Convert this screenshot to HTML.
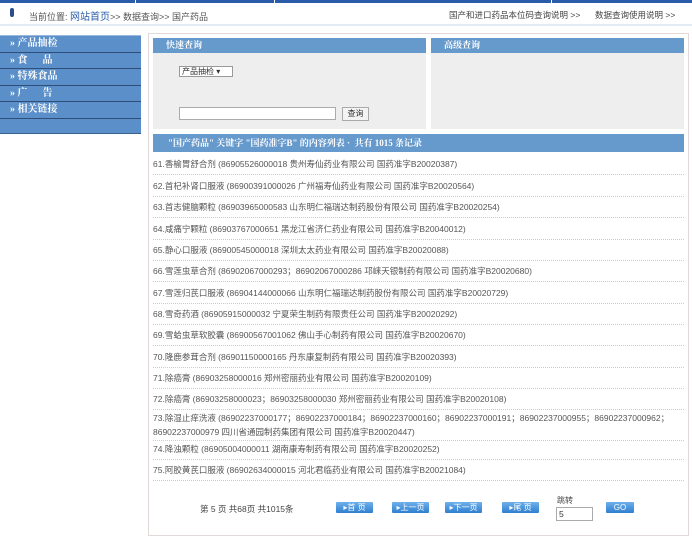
<!DOCTYPE html>
<html><head><meta charset="utf-8"><style>
*{margin:0;padding:0;box-sizing:border-box}
body{width:692px;height:547px;background:#fff;font-family:"Liberation Sans","Noto Sans CJK SC",sans-serif;font-size:9px;color:#333;position:relative;overflow:hidden}
.a{position:absolute}
.topbar{left:0;top:0;width:692px;height:3px;background:#2a5caa}
.crumb{left:0;top:4px;width:692px;height:22px;border-bottom:2px solid #e3ecf5}
.nav{left:0;top:35px;width:141px;height:99px;background:#5b8fc9;border-top:1px solid #9ab8dc;border-bottom:1px solid #3a5f8c}
.nav div{height:16.5px;border-bottom:1px solid #2f4f78;color:#fff;font-weight:bold;font-family:"Liberation Serif","Noto Serif CJK SC",serif;font-size:10px;line-height:15px;padding-left:10px}
.main{left:148px;top:33px;width:541px;height:503px;border:1px solid #e2d8d8}
.pan{background:#eeeeee}
.ph{height:15px;background:#6699cc;color:#fff;font-weight:bold;font-family:"Liberation Serif","Noto Serif CJK SC",serif;font-size:9px;line-height:15px;padding-left:13px}
.row{left:153px;width:531px;font-size:8.5px;color:#555;line-height:12px;border-bottom:1px dotted #ccc}
.btn{top:502px;height:11px;width:37px;background:linear-gradient(#6fb0ea,#2f7fcf);color:#fff;font-size:8px;line-height:11px;text-align:center;border-radius:1px}
</style></head><body>
<div class="a topbar"></div>
<div class="a" style="left:135px;top:0;width:1px;height:3px;background:#fff"></div>
<div class="a" style="left:274px;top:0;width:1px;height:3px;background:#fff"></div>
<div class="a" style="left:551px;top:0;width:1px;height:3px;background:#fff"></div>
<div class="a crumb">
 <span class="a" style="left:10px;top:4px;width:4px;height:9px;background:#2a4d8c;border-radius:2px"></span>
 <span class="a" style="left:29px;top:4px;font-size:9px;color:#555">当前位置: <span style="font-size:10px;color:#2a5caa">网站首页</span>&gt;&gt; 数据查询&gt;&gt; 国产药品</span>
 <span class="a" style="left:449px;top:5px;font-size:8.5px;color:#444">国产和进口药品本位码查询说明 &gt;&gt;</span>
 <span class="a" style="left:595px;top:5px;font-size:8.5px;color:#444">数据查询使用说明 &gt;&gt;</span>
</div>
<div class="a nav">
 <div>» 产品抽检</div><div>» 食&nbsp;&nbsp;&nbsp;&nbsp;&nbsp;&nbsp;品</div><div>» 特殊食品</div><div>» 广&nbsp;&nbsp;&nbsp;&nbsp;&nbsp;&nbsp;告</div><div>» 相关链接</div><div style="border:none"></div>
</div>
<div class="a main"></div>
<div class="a pan" style="left:153px;top:38px;width:273px;height:91px">
 <div class="ph">快速查询</div>
 <div class="a" style="left:26px;top:28px;width:54px;height:11px;border:1px solid #999;background:#fff;font-size:8px;line-height:9px;padding-left:2px">产品抽检 ▾</div>
 <div class="a" style="left:26px;top:69px;width:157px;height:13px;border:1px solid #aaa;background:#fff"></div>
 <div class="a" style="left:189px;top:69px;width:27px;height:14px;border:1px solid #aaa;background:#f4f4f4;font-size:8px;line-height:12px;text-align:center">查询</div>
</div>
<div class="a pan" style="left:431px;top:38px;width:253px;height:91px"><div class="ph">高级查询</div></div>
<div class="a ph" style="left:153px;top:134px;width:531px;height:18px;line-height:18px;padding-left:15px">"国产药品" 关键字 "国药准字B" 的内容列表 · &nbsp;共有 1015 条记录</div>

<div class="a row" style="top:157px;height:18px;padding-top:1px">61.香榆胃舒合剂 (86905526000018 贵州寿仙药业有限公司 国药准字B20020387)</div>
<div class="a row" style="top:179px;height:18px;padding-top:1px">62.首杞补肾口服液 (86900391000026 广州福寿仙药业有限公司 国药准字B20020564)</div>
<div class="a row" style="top:200px;height:18px;padding-top:1px">63.首志健脑颗粒 (86903965000583 山东明仁福瑞达制药股份有限公司 国药准字B20020254)</div>
<div class="a row" style="top:222px;height:18px;padding-top:1px">64.咸痛宁颗粒 (86903767000651 黑龙江省济仁药业有限公司 国药准字B20040012)</div>
<div class="a row" style="top:243px;height:18px;padding-top:1px">65.静心口服液 (86900545000018 深圳太太药业有限公司 国药准字B20020088)</div>
<div class="a row" style="top:264px;height:18px;padding-top:1px">66.雪莲虫草合剂 (86902067000293；86902067000286 邛崃天银制药有限公司 国药准字B20020680)</div>
<div class="a row" style="top:286px;height:18px;padding-top:1px">67.雪莲归芪口服液 (86904144000066 山东明仁福瑞达制药股份有限公司 国药准字B20020729)</div>
<div class="a row" style="top:307px;height:18px;padding-top:1px">68.雪奇药酒 (86905915000032 宁夏荣生制药有限责任公司 国药准字B20020292)</div>
<div class="a row" style="top:328px;height:18px;padding-top:1px">69.雪蛤虫草软胶囊 (86900567001062 佛山手心制药有限公司 国药准字B20020670)</div>
<div class="a row" style="top:350px;height:18px;padding-top:1px">70.隆鹿参茸合剂 (86901150000165 丹东康复制药有限公司 国药准字B20020393)</div>
<div class="a row" style="top:371px;height:18px;padding-top:1px">71.除癌膏 (86903258000016 郑州密丽药业有限公司 国药准字B20020109)</div>
<div class="a row" style="top:392px;height:18px;padding-top:1px">72.除癌膏 (86903258000023；86903258000030 郑州密丽药业有限公司 国药准字B20020108)</div>
<div class="a row" style="top:410px;height:31px;padding-top:1px;line-height:14px">73.除湿止痒洗液 (86902237000177；86902237000184；86902237000160；86902237000191；86902237000955；86902237000962；<br>86902237000979 四川省通园制药集团有限公司 国药准字B20020447)</div>
<div class="a row" style="top:442px;height:18px;padding-top:1px">74.降浊颗粒 (86905004000011 湖南康寿制药有限公司 国药准字B20020252)</div>
<div class="a row" style="top:463px;height:18px;padding-top:1px">75.阿胶黄芪口服液 (86902634000015 河北君临药业有限公司 国药准字B20021084)</div>

<div class="a" style="left:200px;top:503px;font-size:8.5px;color:#444">第 5 页 共68页 共1015条</div>
<div class="a btn" style="left:336px">▸首 页</div>
<div class="a btn" style="left:392px">▸上一页</div>
<div class="a btn" style="left:445px">▸下一页</div>
<div class="a btn" style="left:502px">▸尾 页</div>
<div class="a" style="left:557px;top:495px;font-size:8px;color:#444">跳转</div>
<div class="a" style="left:556px;top:507px;width:37px;height:14px;border:1px solid #aaa;font-size:8.5px;padding-left:2px;line-height:12px">5</div>
<div class="a btn" style="left:606px;width:28px">GO</div>
</body></html>
